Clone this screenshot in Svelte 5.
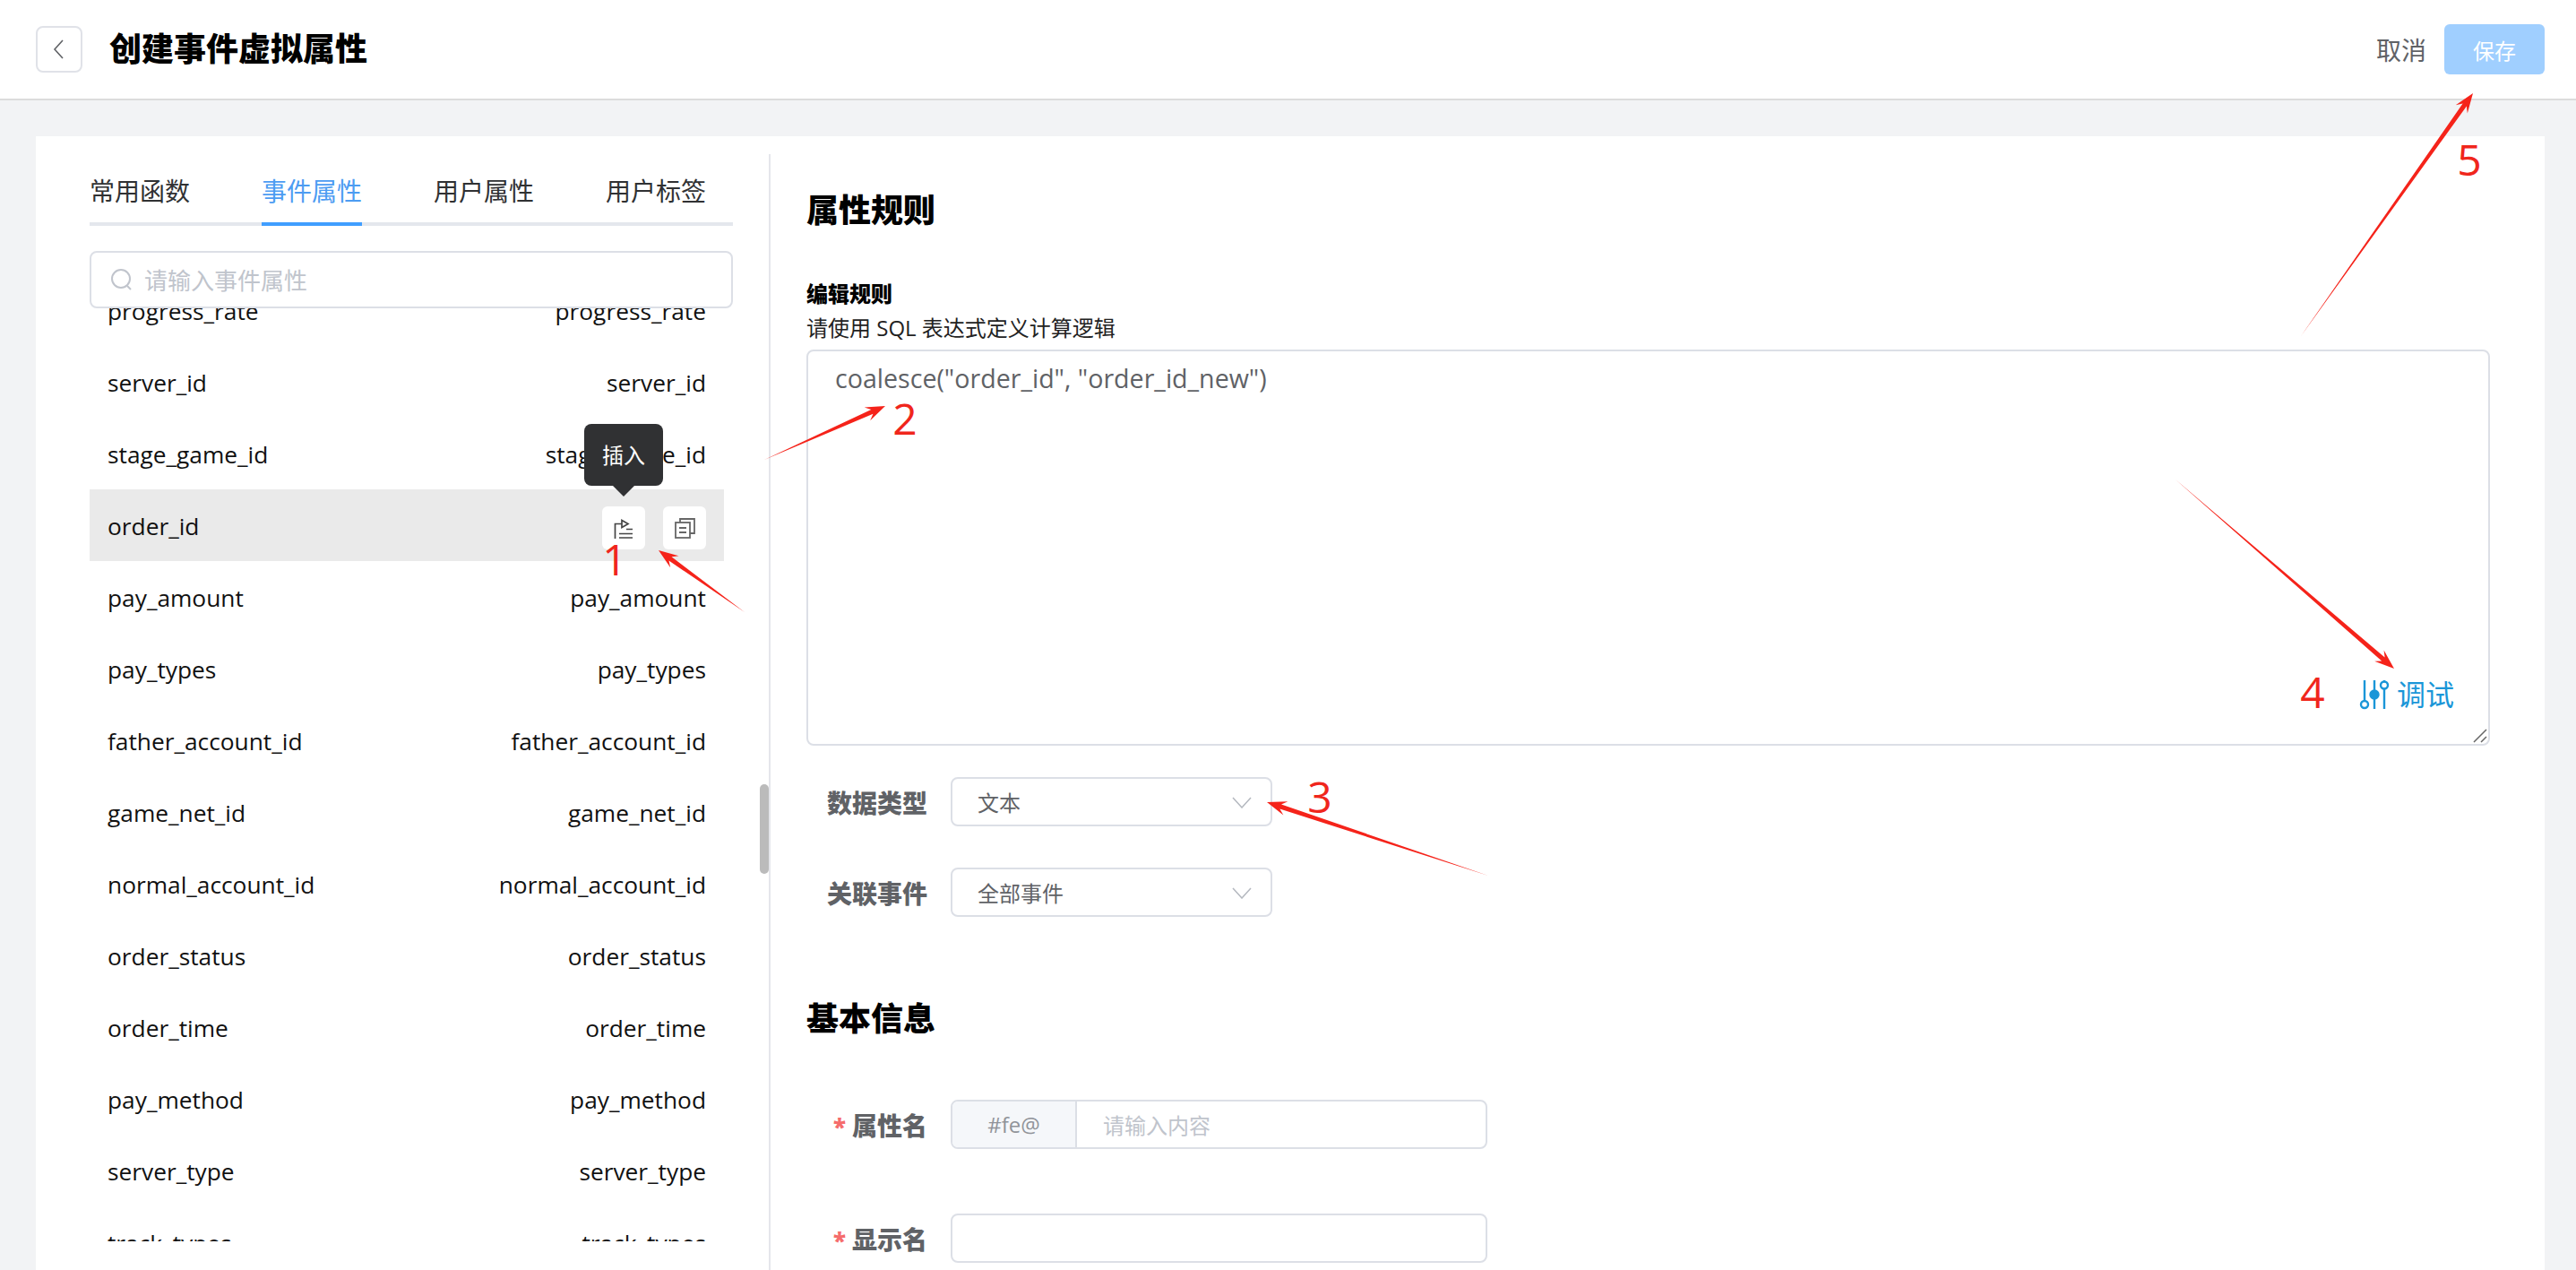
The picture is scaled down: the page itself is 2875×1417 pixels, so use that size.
<script>
  const tabs = ['常用函数', '事件属性', '用户属性', '用户标签'];
  const activeTab = '事件属性';
  const fields = [
    'progress_rate', 'server_id', 'stage_game_id', 'order_id', 'pay_amount', 'pay_types', 'father_account_id',
    'game_net_id', 'normal_account_id', 'order_status', 'order_time', 'pay_method', 'server_type', 'track_types'
  ];
  const hovered = 'order_id';

  // 标注箭头：尾部尖细，靠近箭头处变粗
  const arrows = [
    [831, 683, 735, 614],
    [853, 513, 988, 453],
    [1661, 977, 1414, 895],
    [2428, 535, 2672, 746],
    [2568, 375, 2760, 104]
  ];
  const arrowPoints = ([x1, y1, x2, y2]) => {
    const len = Math.hypot(x2 - x1, y2 - y1);
    const ux = (x2 - x1) / len, uy = (y2 - y1) / len;
    const nx = -uy, ny = ux;
    const at = (back, side) => `${x2 - ux * back + nx * side},${y2 - uy * back + ny * side}`;
    return [`${x1},${y1}`, at(16, 2.6), at(22, 8), `${x2},${y2}`, at(22, -8), at(16, -2.6)].join(' ');
  };
  const marks = [
    ['1', 686, 642],
    ['2', 1010, 485],
    ['3', 1473, 907],
    ['4', 2581, 790],
    ['5', 2756, 196]
  ];
</script>

<div class="page">
  <header class="topbar">
    <button class="back" aria-label="返回">
      <svg width="16" height="24" viewBox="0 0 16 24"><path d="M12 2 3 12l9 10" fill="none" stroke="#606266" stroke-width="1.6"/></svg>
    </button>
    <h1>创建事件虚拟属性</h1>
    <div class="actions">
      <span class="cancel">取消</span>
      <button class="save" disabled>保存</button>
    </div>
  </header>

  <main class="main">
    <div class="card">
      <aside class="left">
        <div class="tabs">
          {#each tabs as tab}
            <div class="tab" class:active={tab === activeTab}>{tab}</div>
          {/each}
        </div>
        <div class="search">
          <svg width="26" height="28" viewBox="0 0 26 28"><circle cx="12" cy="13" r="10" fill="none" stroke="#c0c4cc" stroke-width="2"/><path d="m19 21 4 4" stroke="#c0c4cc" stroke-width="2"/></svg>
          <span>请输入事件属性</span>
        </div>
        <div class="list">
          <div class="rows">
            {#each fields as f}
              <div class="row" class:hover={f === hovered}>
                <span>{f}</span>
                {#if f === hovered}
                  <div class="row-btns">
                    <div class="icon-btn">
                      <svg width="24" height="24" viewBox="0 0 24 24" fill="none" stroke="#444" stroke-width="1.700"><path d="M2.500 24V7.500H10"/><path d="M10 3.500 17 7.500 10 11.500z" fill="#fff"/><path d="M15 13.500h7M7 18.500h15M7 23h15"/></svg>
                      <div class="tooltip">插入</div>
                    </div>
                    <div class="icon-btn">
                      <svg width="24" height="24" viewBox="0 0 24 24" fill="none" stroke="#666" stroke-width="1.800"><rect x="2" y="6" width="16" height="17"/><path d="M7 6V2h16v16h-5M6 12h8M6 17h8"/></svg>
                    </div>
                  </div>
                {:else}
                  <span>{f}</span>
                {/if}
              </div>
            {/each}
          </div>
          <div class="thumb"></div>
        </div>
      </aside>

      <section class="right">
        <h2>属性规则</h2>
        <div class="rule-label">编辑规则</div>
        <div class="rule-desc">请使用 SQL 表达式定义计算逻辑</div>
        <div class="editor">
          <span class="code">coalesce("order_id", "order_id_new")</span>
          <div class="debug">
            <svg width="34" height="34" viewBox="0 0 34 34" fill="none" stroke="#1a96d8" stroke-width="2.400"><path d="M6 1v23M6 32v1M17 1v32M28 1v1M28 11v22"/><circle cx="6" cy="28" r="4"/><circle cx="17" cy="17" r="4.500" fill="#1a96d8"/><circle cx="28" cy="6.500" r="4"/></svg>
            <span>调试</span>
          </div>
          <svg class="grip" width="16" height="16" viewBox="0 0 16 16" stroke="#666" stroke-width="1.500"><path d="M1 15 15 1M9 15l6-6"/></svg>
        </div>

        <div class="form-row first">
          <div class="label">数据类型</div>
          <div class="select">
            <span>文本</span>
            <svg width="22" height="14" viewBox="0 0 22 14"><path d="m1 2 10 11L21 2" fill="none" stroke="#b4b8bf" stroke-width="1.500"/></svg>
          </div>
        </div>
        <div class="form-row second">
          <div class="label">关联事件</div>
          <div class="select">
            <span>全部事件</span>
            <svg width="22" height="14" viewBox="0 0 22 14"><path d="m1 2 10 11L21 2" fill="none" stroke="#b4b8bf" stroke-width="1.500"/></svg>
          </div>
        </div>

        <h2 class="basic">基本信息</h2>
        <div class="form-row name">
          <div class="label"><i>*</i>属性名</div>
          <div class="input">
            <div class="prepend">#fe@</div>
            <span class="placeholder">请输入内容</span>
          </div>
        </div>
        <div class="form-row display">
          <div class="label"><i>*</i>显示名</div>
          <div class="input"></div>
        </div>
      </section>
    </div>
  </main>

  <svg class="marks" width="2875" height="1417" viewBox="0 0 2875 1417">
    {#each arrows as a}
      <polygon points={arrowPoints(a)} fill="#f5231a" />
    {/each}
    {#each marks as [n, x, y]}
      <text {x} {y} text-anchor="middle">{n}</text>
    {/each}
  </svg>
</div>

<style>
  :global(body) {
    margin: 0;
  }

  .page {
    position: relative;
    height: 1417px;
    overflow: hidden;
    background: #f2f3f5;
    font-family: "Open Sans", "Noto Sans CJK SC", sans-serif;
    color: #111;
  }

  button {
    font: inherit;
    padding: 0;
  }

  h1, h2 {
    margin: 0;
    font-size: 36px;
    font-weight: 900;
    line-height: 50px;
    color: #000;
  }

  .topbar {
    display: flex;
    align-items: center;
    height: 110px;
    padding: 0 35px 0 40px;
    background: #fff;
    border-bottom: 2px solid #dcdcdc;
  }

  .back {
    display: flex;
    align-items: center;
    justify-content: center;
    width: 52px;
    height: 52px;
    background: #fff;
    border: 2px solid #e0e2e8;
    border-radius: 8px;
  }

  .topbar h1 {
    margin-left: 30px;
  }

  .actions {
    display: flex;
    align-items: center;
    margin-left: auto;
    gap: 20px;
  }

  .cancel {
    font-size: 28px;
    color: #606266;
  }

  .save {
    width: 112px;
    height: 56px;
    border: 0;
    border-radius: 6px;
    background: #a0cfff;
    color: #fff;
    font-size: 24px;
  }

  .main {
    padding: 40px 35px 0 40px;
  }

  .card {
    display: flex;
    height: 1245px;
    padding-top: 20px;
    background: #fff;
  }

  .left {
    box-sizing: border-box;
    width: 820px;
    padding-left: 60px;
    border-right: 2px solid #e5e6eb;
  }

  .tabs {
    display: flex;
    gap: 80px;
    width: 718px;
    border-bottom: 4px solid #e4e7ed;
  }

  .tab {
    margin-bottom: -4px;
    padding: 21px 0 15px;
    font-size: 28px;
    line-height: 40px;
    color: #303133;
    border-bottom: 4px solid transparent;
  }

  .tab.active {
    color: #4c9cf2;
    border-bottom-color: #409eff;
  }

  .search {
    display: flex;
    align-items: center;
    gap: 12px;
    box-sizing: border-box;
    width: 718px;
    height: 64px;
    margin-top: 28px;
    padding-left: 21px;
    border: 2px solid #dcdfe6;
    border-radius: 8px;
    font-size: 26px;
    color: #c0c4cc;
  }

  .list {
    position: relative;
    width: 758px;
    height: 1041px;
    overflow: hidden;
  }

  .rows {
    width: 708px;
    margin-top: -38px;
  }

  .row {
    display: flex;
    align-items: center;
    justify-content: space-between;
    box-sizing: border-box;
    height: 80px;
    padding: 1px 20px 0;
    font-size: 26.3px;
  }

  .row.hover {
    background: #eaeaea;
  }

  .row-btns {
    display: flex;
    gap: 20px;
    margin-top: 4px;
  }

  .icon-btn {
    position: relative;
    display: flex;
    align-items: center;
    justify-content: center;
    width: 48px;
    height: 48px;
    background: #fff;
    border-radius: 6px;
  }

  .tooltip {
    position: absolute;
    left: -20px;
    bottom: 71px;
    width: 88px;
    height: 69px;
    line-height: 69px;
    text-align: center;
    background: #303133;
    border-radius: 8px;
    color: #fff;
    font-size: 24px;
  }

  .tooltip::after {
    content: '';
    position: absolute;
    left: 32px;
    top: 69px;
    border: 12px solid transparent;
    border-top-color: #303133;
    border-bottom: 0;
  }

  .thumb {
    position: absolute;
    right: 0;
    top: 531px;
    width: 10px;
    height: 100px;
    border-radius: 5px;
    background: #bbb;
  }

  .right {
    flex: none;
    width: 1879px;
    margin-left: 40px;
    padding-top: 38px;
  }

  .rule-label {
    margin-top: 50px;
    font-size: 24px;
    font-weight: 900;
    line-height: 36px;
    color: #000;
  }

  .rule-desc {
    margin-top: 2px;
    font-size: 24px;
    line-height: 36px;
    color: #222;
  }

  .editor {
    position: relative;
    box-sizing: border-box;
    height: 442px;
    margin-top: 6px;
    padding: 10px 30px;
    border: 2px solid #dcdfe6;
    border-radius: 8px;
  }

  .code {
    font-size: 28.6px;
    line-height: 40px;
    color: #606266;
  }

  .debug {
    position: absolute;
    right: 38px;
    bottom: 38px;
    display: flex;
    align-items: center;
    gap: 8px;
    font-size: 32px;
    line-height: 34px;
    color: #1a96d8;
  }

  .grip {
    position: absolute;
    right: 1px;
    bottom: 1px;
  }

  .form-row {
    display: flex;
    align-items: center;
    gap: 26px;
    height: 55px;
  }

  .first { margin-top: 35px; }
  .second { margin-top: 46px; }
  .basic { margin-top: 89px; }
  .name { margin-top: 65px; }
  .display { margin-top: 72px; }

  .label {
    width: 135px;
    text-align: right;
    font-size: 28px;
    font-weight: 900;
    color: #606266;
  }

  .label i {
    margin-right: 7px;
    font-style: normal;
    font-size: 26px;
    color: #f56c6c;
  }

  .select, .input {
    display: flex;
    align-items: center;
    box-sizing: border-box;
    height: 55px;
    border: 2px solid #dcdfe6;
    border-radius: 8px;
    overflow: hidden;
    font-size: 24px;
  }

  .select {
    justify-content: space-between;
    width: 359px;
    padding: 0 21px 0 28px;
    color: #606266;
  }

  .input {
    width: 599px;
  }

  .prepend {
    box-sizing: border-box;
    width: 139px;
    height: 100%;
    line-height: 51px;
    text-align: center;
    background: #f5f7fa;
    border-right: 2px solid #dcdfe6;
    color: #909399;
  }

  .placeholder {
    margin-left: 29px;
    color: #c0c4cc;
  }

  .marks {
    position: absolute;
    left: 0;
    top: 0;
    pointer-events: none;
  }

  .marks text {
    font-family: "Open Sans", sans-serif;
    font-size: 48px;
    fill: #f0261c;
  }
</style>
